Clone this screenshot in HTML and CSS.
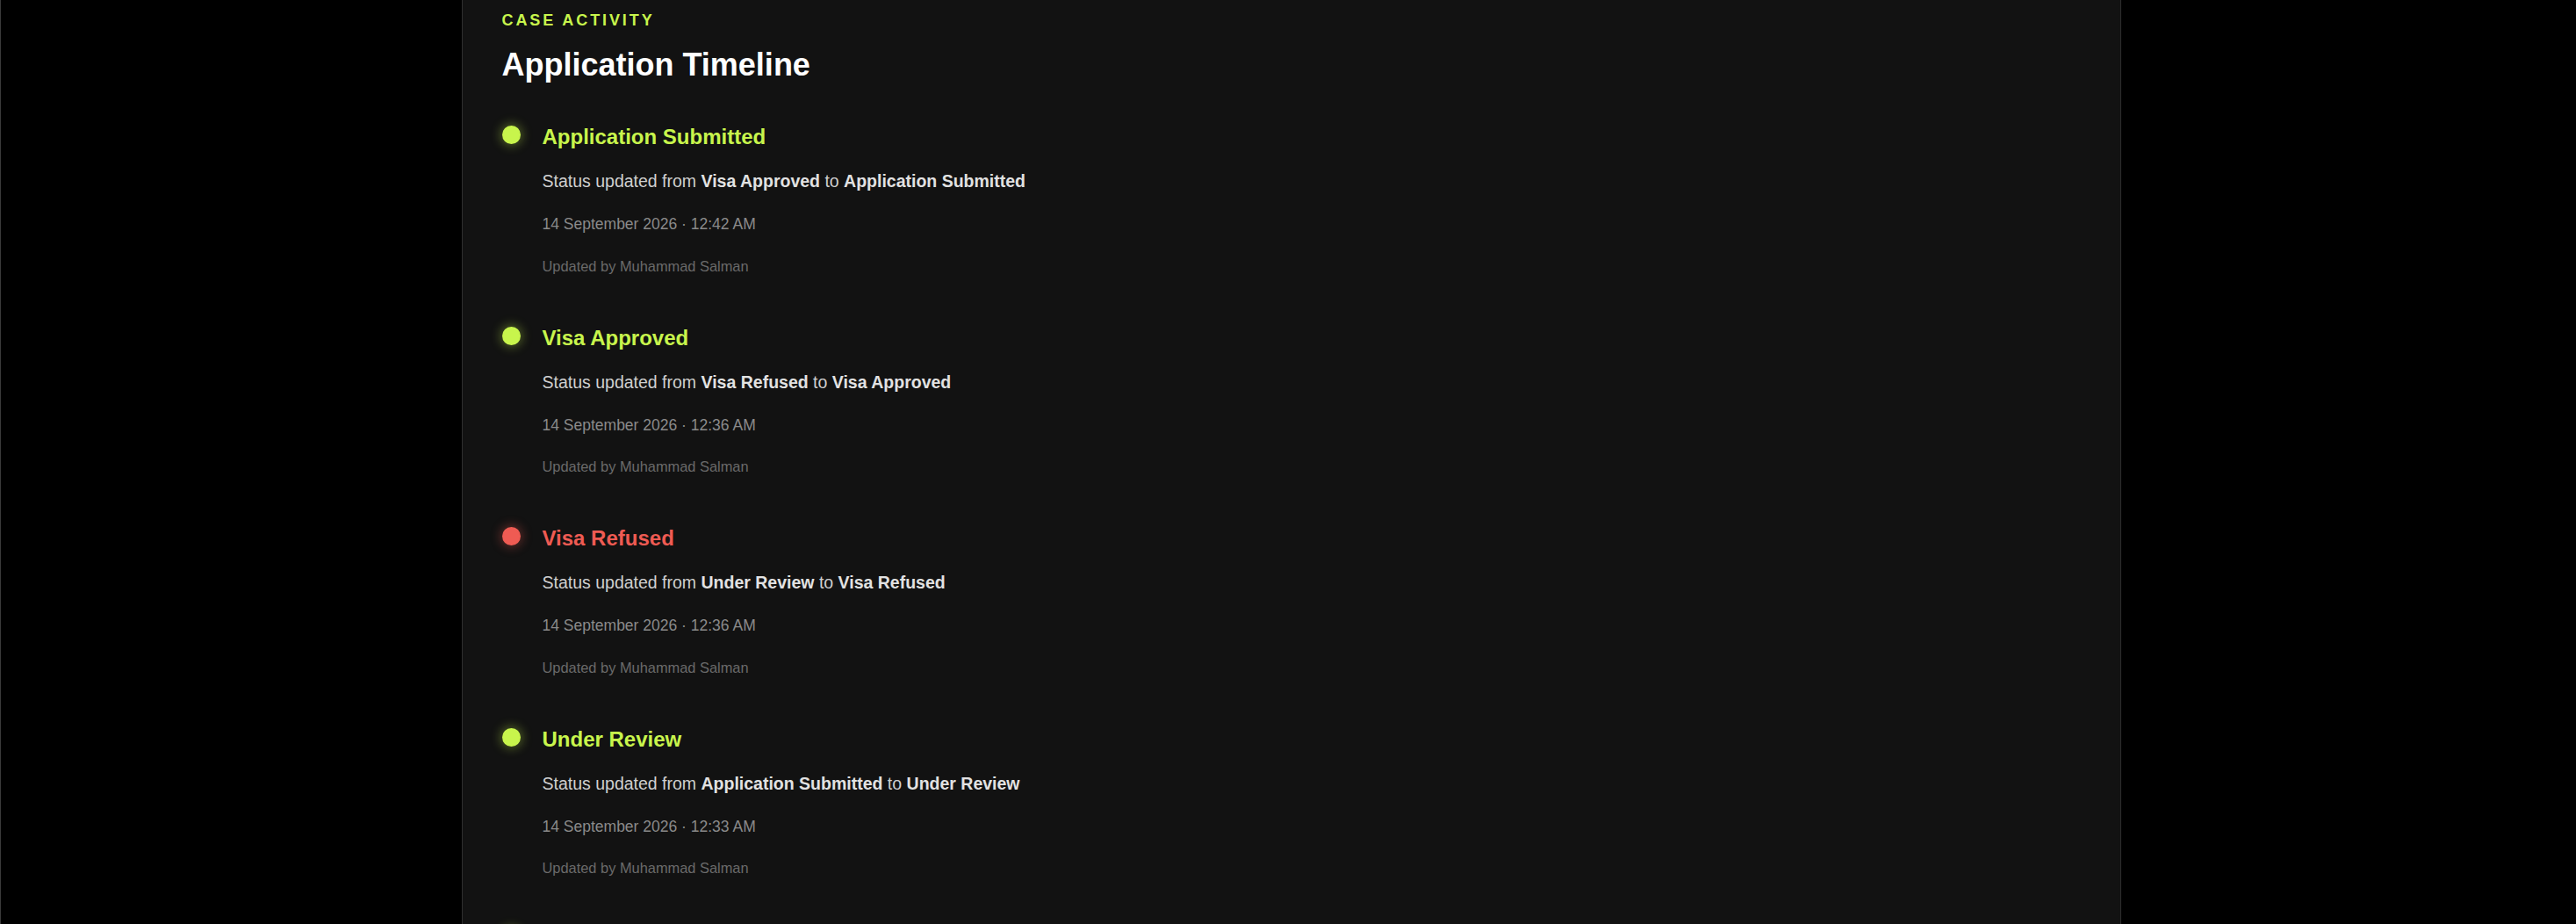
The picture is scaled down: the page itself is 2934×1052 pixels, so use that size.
FILE: index.html
```html
<!DOCTYPE html>
<html lang="en">
<head>
<meta charset="utf-8">
<title>Application Timeline</title>
<link rel="stylesheet" href="styles.css">
</head>
<body>
<div class="page">
  <section class="panel">
    <p class="eyebrow">CASE ACTIVITY</p>
    <h1 class="heading">Application Timeline</h1>
    <ol class="timeline">
      <li class="event">
        <span class="dot dot-ok"></span>
        <div class="event-body">
          <h2 class="event-title title-ok">Application Submitted</h2>
          <p class="event-status">Status updated from <strong>Visa Approved</strong> to <strong>Application Submitted</strong></p>
          <p class="event-date">14 September 2026 · 12:42 AM</p>
          <p class="event-author">Updated by Muhammad Salman</p>
        </div>
      </li>
      <li class="event">
        <span class="dot dot-ok"></span>
        <div class="event-body">
          <h2 class="event-title title-ok">Visa Approved</h2>
          <p class="event-status">Status updated from <strong>Visa Refused</strong> to <strong>Visa Approved</strong></p>
          <p class="event-date">14 September 2026 · 12:36 AM</p>
          <p class="event-author">Updated by Muhammad Salman</p>
        </div>
      </li>
      <li class="event">
        <span class="dot dot-bad"></span>
        <div class="event-body">
          <h2 class="event-title title-bad">Visa Refused</h2>
          <p class="event-status">Status updated from <strong>Under Review</strong> to <strong>Visa Refused</strong></p>
          <p class="event-date">14 September 2026 · 12:36 AM</p>
          <p class="event-author">Updated by Muhammad Salman</p>
        </div>
      </li>
      <li class="event">
        <span class="dot dot-ok"></span>
        <div class="event-body">
          <h2 class="event-title title-ok">Under Review</h2>
          <p class="event-status">Status updated from <strong>Application Submitted</strong> to <strong>Under Review</strong></p>
          <p class="event-date">14 September 2026 · 12:33 AM</p>
          <p class="event-author">Updated by Muhammad Salman</p>
        </div>
      </li>
      <li class="event">
        <span class="dot dot-ok"></span>
      </li>
    </ol>
  </section>
</div>
</body>
</html>
```
FILE: styles.css
```css
* { box-sizing: border-box; }

html, body {
  margin: 0;
  padding: 0;
  background: #000;
  height: 100%;
  overflow: hidden;
}

body {
  font-family: "Liberation Sans", Arial, Helvetica, sans-serif;
  color: #d0d0d0;
}

.page {
  min-height: 100vh;
  border-left: 1px solid #3a3a3a;
  padding-left: 6px;
  display: flex;
  justify-content: center;
}

.panel {
  width: 1890px;
  min-height: 100vh;
  background: #121212;
  border-left: 1px solid #2e2e2e;
  border-right: 1px solid #2e2e2e;
  padding: 10px 45px 0 45px;
}

.eyebrow {
  margin: 0;
  font-size: 18px;
  line-height: 27px;
  font-weight: 700;
  letter-spacing: 2.9px;
  color: #c8f54c;
}

.heading {
  margin: 15px 0 0 0;
  font-size: 36px;
  line-height: 43px;
  font-weight: 700;
  color: #ffffff;
}

.timeline {
  list-style: none;
  margin: 45px 0 0 0;
  padding: 0;
  display: flex;
  flex-direction: column;
  gap: 54px;
}

.event {
  display: flex;
  align-items: flex-start;
  gap: 25px;
}

.dot {
  flex: 0 0 auto;
  width: 21px;
  height: 21px;
  border-radius: 50%;
  margin-top: 3px;
}

.dot-ok {
  background: #c8f54c;
  box-shadow: 0 0 12px 2px rgba(200, 245, 76, 0.35);
}

.dot-bad {
  background: #ef5b53;
  box-shadow: 0 0 12px 2px rgba(239, 91, 83, 0.35);
}

.event-body {
  display: flex;
  flex-direction: column;
}

.event-title {
  margin: 0;
  font-size: 24px;
  line-height: 32px;
  font-weight: 700;
}

.title-ok { color: #c8f54c; }
.title-bad { color: #ef5b53; }

.event-status {
  margin: 20px 0 0 0;
  font-size: 19.5px;
  line-height: 28px;
  color: #cfcfcf;
}

.event-status strong {
  font-weight: 700;
  color: #e2e2e2;
}

.event-date {
  margin: 23px 0 0 0;
  font-size: 17.5px;
  line-height: 24px;
  color: #8a8a8a;
}

.event-author {
  margin: 23.5px 0 0 0;
  font-size: 16.4px;
  line-height: 24px;
  color: #6a6a6a;
}
```
